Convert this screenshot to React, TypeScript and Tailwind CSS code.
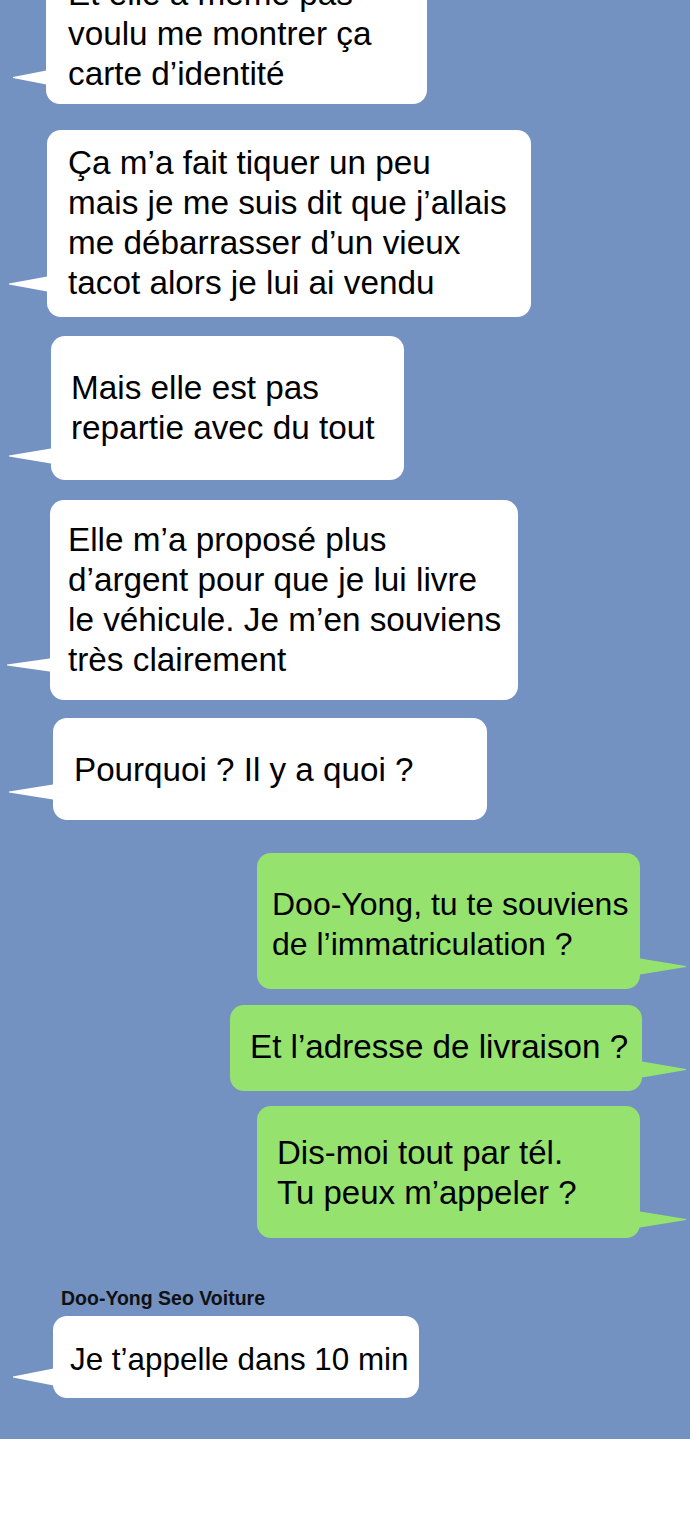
type Msg = {
  side: "left" | "right";
  box: string;
  size: string;
  lines: string[];
  tail: string;
  tw: number;
  th: number;
};

const messages: Msg[] = [
  {
    side: "left",
    box: "-mt-[46px] ml-[46px] w-[381px] pl-[22px] pt-[20px] pb-[10px]",
    size: "text-[33.3px]",
    lines: ["Et elle a même pas", "voulu me montrer ça", "carte d’identité"],
    tail: "-left-[33px] bottom-[19px]",
    tw: 36,
    th: 15,
  },
  {
    side: "left",
    box: "mt-[26px] ml-[47px] w-[484px] pl-[21px] pt-[13px] pb-[14px]",
    size: "text-[33.3px]",
    lines: [
      "Ça m’a fait tiquer un peu",
      "mais je me suis dit que j’allais",
      "me débarrasser d’un vieux",
      "tacot alors je lui ai vendu",
    ],
    tail: "-left-[38px] bottom-[25px]",
    tw: 41,
    th: 16,
  },
  {
    side: "left",
    box: "mt-[19px] ml-[51px] w-[353px] pl-[20px] pt-[32px] pb-[32px]",
    size: "text-[33.3px]",
    lines: ["Mais elle est pas", "repartie avec du tout"],
    tail: "-left-[42px] bottom-[16px]",
    tw: 45,
    th: 16,
  },
  {
    side: "left",
    box: "mt-[20px] ml-[50px] w-[468px] pl-[18px] pt-[20px] pb-[20px]",
    size: "text-[33.3px]",
    lines: [
      "Elle m’a proposé plus",
      "d’argent pour que je lui livre",
      "le véhicule. Je m’en souviens",
      "très clairement",
    ],
    tail: "-left-[43px] bottom-[28px]",
    tw: 46,
    th: 14,
  },
  {
    side: "left",
    box: "mt-[18px] ml-[53px] w-[434px] pl-[21px] pt-[32px] pb-[30px]",
    size: "text-[33.2px]",
    lines: ["Pourquoi ? Il y a quoi ?"],
    tail: "-left-[44px] bottom-[20px]",
    tw: 47,
    th: 16,
  },
  {
    side: "right",
    box: "mt-[33px] ml-[257px] w-[383px] pl-[15px] pt-[31px] pb-[25px]",
    size: "text-[32px]",
    lines: ["Doo-Yong, tu te souviens", "de l’immatriculation ?"],
    tail: "-right-[46px] bottom-[14px]",
    tw: 49,
    th: 17,
  },
  {
    side: "right",
    box: "mt-[16px] ml-[230px] w-[412px] pl-[20px] pt-[22px] pb-[24px]",
    size: "text-[33.2px]",
    lines: ["Et l’adresse de livraison ?"],
    tail: "-right-[44px] bottom-[13px]",
    tw: 47,
    th: 17,
  },
  {
    side: "right",
    box: "mt-[15px] ml-[257px] w-[383px] pl-[20px] pt-[27px] pb-[25px]",
    size: "text-[33px]",
    lines: ["Dis-moi tout par tél.", "Tu peux m’appeler ?"],
    tail: "-right-[46px] bottom-[10px]",
    tw: 49,
    th: 17,
  },
];

const lastMsg: Msg = {
  side: "left",
  box: "mt-[6px] ml-[53px] w-[366px] pl-[17px] pt-[24px] pb-[18px]",
  size: "text-[31.4px]",
  lines: ["Je t’appelle dans 10 min"],
  tail: "-left-[40px] bottom-[12px]",
  tw: 43,
  th: 18,
};

function Tail({ side, tw, th, className }: { side: "left" | "right"; tw: number; th: number; className: string }) {
  const mid = th / 2;
  const pts =
    side === "left"
      ? `${tw},0 0,${mid - 0.6} 0,${mid + 0.6} ${tw},${th}`
      : `0,0 ${tw},${mid - 0.6} ${tw},${mid + 0.6} 0,${th}`;
  return (
    <svg
      width={tw}
      height={th}
      viewBox={`0 0 ${tw} ${th}`}
      className={`absolute ${className}`}
    >
      <polygon points={pts} fill={side === "left" ? "#ffffff" : "#95e36e"} />
    </svg>
  );
}

function Bubble({ msg }: { msg: Msg }) {
  const bg = msg.side === "left" ? "bg-white" : "bg-[#95e36e]";
  return (
    <div className={`relative shrink-0 rounded-[14px] ${bg} ${msg.box}`}>
      <Tail side={msg.side} tw={msg.tw} th={msg.th} className={msg.tail} />
      <div className={`relative whitespace-nowrap leading-[40px] text-black ${msg.size}`}>
        {msg.lines.map((line, i) => (
          <div key={i}>{line}</div>
        ))}
      </div>
    </div>
  );
}

export default function App() {
  return (
    <div className="w-[690px] min-h-[1531px] bg-white font-['Liberation_Sans',Arial,sans-serif]">
      <div className="flex h-[1439px] flex-col overflow-hidden bg-[#7392c2]">
        {messages.map((m, i) => (
          <Bubble key={i} msg={m} />
        ))}
        <p className="ml-[61px] mt-[48px] shrink-0 text-[19.5px] font-bold leading-[24px] text-[#111]">
          Doo-Yong Seo Voiture
        </p>
        <Bubble msg={lastMsg} />
      </div>
    </div>
  );
}
